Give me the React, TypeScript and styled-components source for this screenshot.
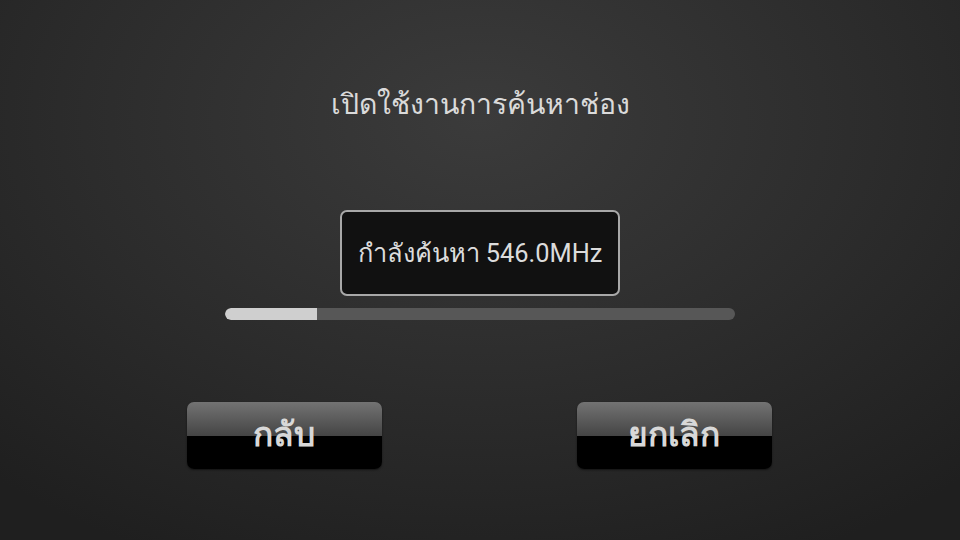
import React from 'react';
import styled, { createGlobalStyle } from 'styled-components';

const GlobalStyle = createGlobalStyle`
  html, body {
    margin: 0;
    padding: 0;
    width: 960px;
    height: 540px;
    overflow: hidden;
    background: #222;
  }
  * {
    box-sizing: border-box;
  }
`;

const Screen = styled.div`
  width: 960px;
  height: 540px;
  display: flex;
  flex-direction: column;
  align-items: center;
  font-family: Roboto, 'Noto Sans', 'DejaVu Sans', sans-serif;
  color: #dcdcdc;
  background: radial-gradient(ellipse 75% 90% at 50% 22%, #3b3b3b 0%, #2c2c2c 55%, #1f1f1f 100%);
`;

const Title = styled.h1`
  margin: 84px 0 0;
  height: 42px;
  line-height: 42px;
  font-size: 28.4px;
  font-weight: 400;
  color: #dadada;
`;

const StatusBox = styled.div`
  margin-top: 84px;
  width: 280px;
  height: 86px;
  display: flex;
  align-items: center;
  justify-content: center;
  background: #111;
  border: 2px solid #a8a8a8;
  border-radius: 7px;
  font-size: 25.4px;
  color: #dcdcdc;
`;

const Track = styled.div`
  margin-top: 12px;
  width: 510px;
  height: 12px;
  border-radius: 6px;
  background: #575757;
  overflow: hidden;
`;

const Fill = styled.div`
  height: 100%;
  background: #cfcfcf;
  border-radius: 6px 0 0 6px;
`;

const ButtonRow = styled.div`
  margin-top: 82px;
  width: 585px;
  display: flex;
  justify-content: space-between;
  transform: translateX(-1px);
`;

const GlossButton = styled.button`
  width: 195px;
  height: 67px;
  border: none;
  border-radius: 7px;
  padding: 0 0 3px;
  background: linear-gradient(
    to bottom,
    #737373 0%,
    #5c5c5c 25%,
    #454545 50%,
    #000 50%,
    #000 100%
  );
  box-shadow: 0 1px 2px rgba(0, 0, 0, 0.5);
  font-family: Roboto, 'Noto Sans', 'DejaVu Sans', sans-serif;
  font-size: 33.5px;
  font-weight: 700;
  color: #d8d8d8;
  cursor: pointer;
`;

export default function App() {
  const progress = 18;
  return (
    <>
      <GlobalStyle />
      <Screen>
        <Title>เปิดใช้งานการค้นหาช่อง</Title>
        <StatusBox>กำลังค้นหา 546.0MHz</StatusBox>
        <Track>
          <Fill style={{ width: `${progress}%` }} />
        </Track>
        <ButtonRow>
          <GlossButton>กลับ</GlossButton>
          <GlossButton>ยกเลิก</GlossButton>
        </ButtonRow>
      </Screen>
    </>
  );
}
